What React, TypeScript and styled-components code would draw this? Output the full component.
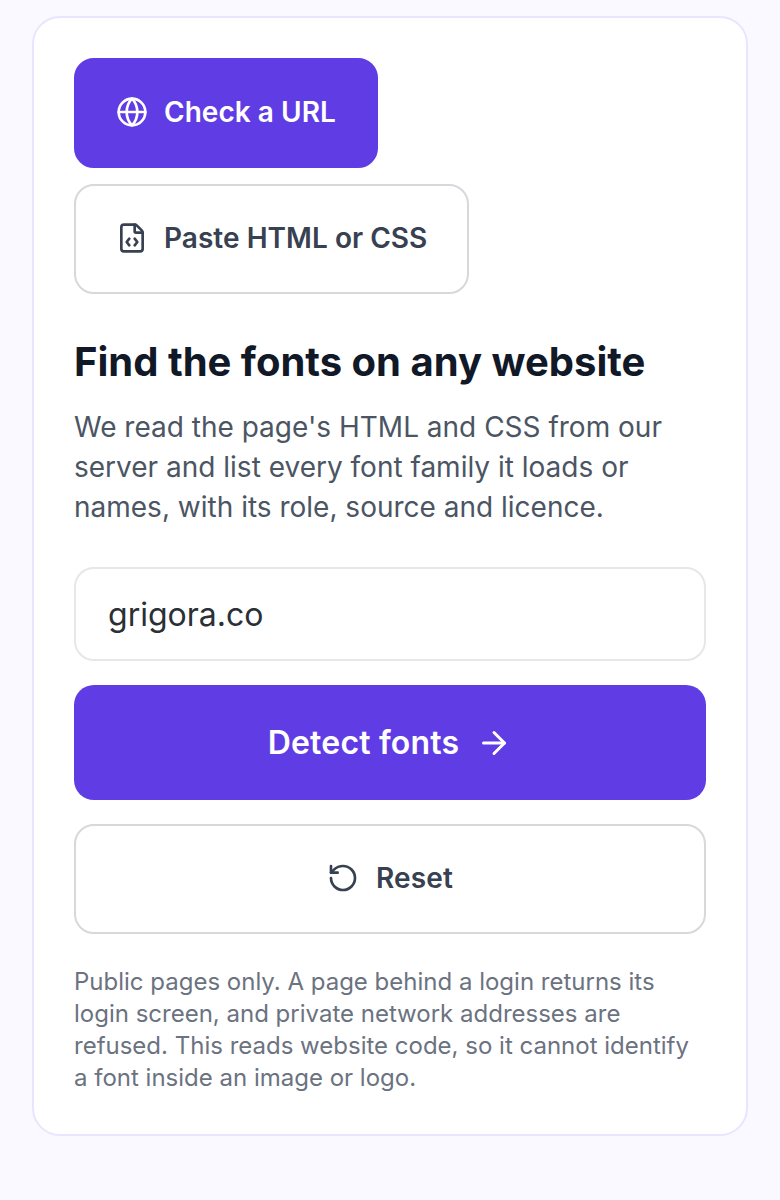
import React from "react"
import styled, { createGlobalStyle } from "styled-components"
import { Globe, FileCode, ArrowRight, RotateCcw } from "lucide-react"

const GlobalStyle = createGlobalStyle`
    html, body {
        margin: 0;
        padding: 0;
        background: #faf9ff;
    }
    body {
        font-family: Inter, "Liberation Sans", sans-serif;
    }
`

const Page = styled.div`
    padding: 16px 32px 64px;
    box-sizing: border-box;
    min-height: 1200px;
`

const Card = styled.main`
    background: #fff;
    border: 2px solid #e9e5ff;
    border-radius: 28px;
    padding: 40px;
    display: flex;
    flex-direction: column;
`

const Tabs = styled.div`
    display: flex;
    flex-direction: column;
    align-items: flex-start;
    gap: 16px;
    margin-bottom: 40px;
`

const Tab = styled.button<{ $active?: boolean }>`
    display: inline-flex;
    align-items: center;
    gap: 16px;
    box-sizing: border-box;
    height: 110px;
    padding: 0 40px 2px;
    border-radius: 20px;
    border: 2px solid ${p => (p.$active ? "#5f3ce4" : "#d6d8dc")};
    background: ${p => (p.$active ? "#5f3ce4" : "#fff")};
    color: ${p => (p.$active ? "#fff" : "#374151")};
    font: 600 28px Inter, sans-serif;
    letter-spacing: 0.03px;
`

const Title = styled.h1`
    margin: 0 0 17px;
    font-size: 40px;
    line-height: 56px;
    font-weight: 700;
    color: #111827;
`

const Lead = styled.p`
    margin: 0 0 40px;
    font-size: 28px;
    line-height: 40px;
    color: #4b5563;
`

const UrlInput = styled.input`
    box-sizing: border-box;
    width: 100%;
    height: 94px;
    padding: 0 32px;
    border: 2px solid #e5e7eb;
    border-radius: 20px;
    font: 400 32px Inter, sans-serif;
    color: #2b2f36;
    margin-bottom: 24px;
`

const Action = styled.button<{ $primary?: boolean }>`
    display: flex;
    align-items: center;
    justify-content: center;
    gap: 17px;
    box-sizing: border-box;
    width: 100%;
    height: ${p => (p.$primary ? "115px" : "110px")};
    margin-bottom: ${p => (p.$primary ? "24px" : "32px")};
    padding: ${p => (p.$primary ? "0" : "0 0 2px")};
    border-radius: 20px;
    border: ${p => (p.$primary ? "none" : "2px solid #d6d8dc")};
    background: ${p => (p.$primary ? "#5f3ce4" : "#fff")};
    color: ${p => (p.$primary ? "#fff" : "#374151")};
    font: 600 ${p => (p.$primary ? "32px" : "28px")} Inter, sans-serif;
    letter-spacing: ${p => (p.$primary ? "0.2px" : "0.1px")};
`

const Note = styled.p`
    margin: 0;
    font-size: 24px;
    line-height: 32px;
    color: #6b7280;
`

const App = () => (
    <Page>
        <GlobalStyle />
        <Card>
            <Tabs>
                <Tab $active><Globe size={32} strokeWidth={2} />Check a URL</Tab>
                <Tab><FileCode size={32} strokeWidth={2} />Paste HTML or CSS</Tab>
            </Tabs>
            <Title>Find the fonts on any website</Title>
            <Lead>We read the page's HTML and CSS from our server and list every font family it loads or names, with its role, source and licence.</Lead>
            <UrlInput defaultValue="grigora.co" />
            <Action $primary>Detect fonts<ArrowRight size={36} strokeWidth={2} /></Action>
            <Action><RotateCcw size={32} strokeWidth={2} />Reset</Action>
            <Note>Public pages only. A page behind a login returns its login screen, and private network addresses are refused. This reads website code, so it cannot identify a font inside an image or logo.</Note>
        </Card>
    </Page>
)

export default App
